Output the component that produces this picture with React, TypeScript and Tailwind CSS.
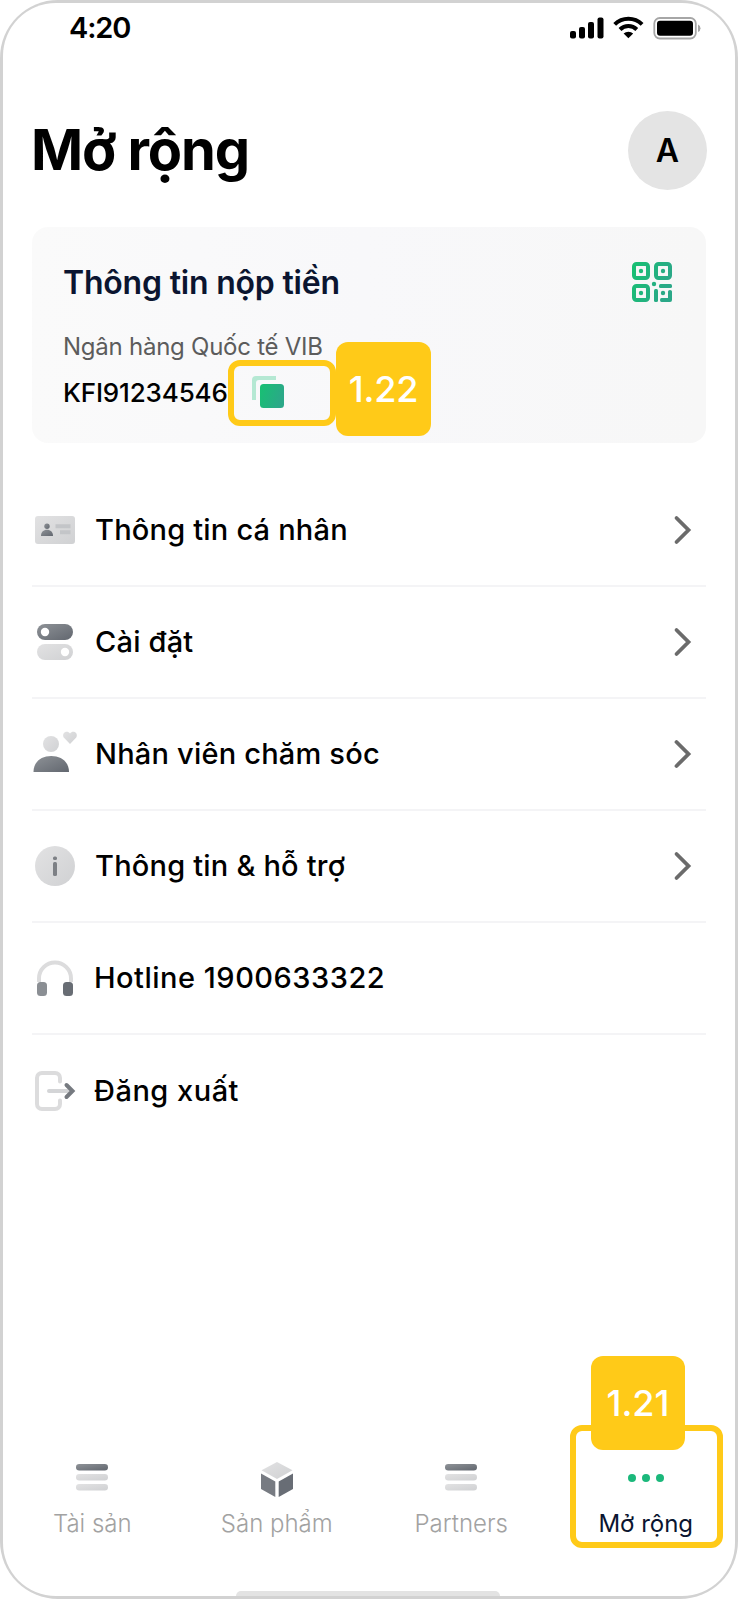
import type { ReactNode } from "react";

const Grads = () => (
  <svg width="0" height="0" className="absolute">
    <defs>
      <linearGradient id="dark" x1="0" y1="0" x2="1" y2="1">
        <stop offset="0" stopColor="#8e9297" />
        <stop offset="1" stopColor="#62676f" />
      </linearGradient>
      <linearGradient id="light" x1="0" y1="0" x2="1" y2="1">
        <stop offset="0" stopColor="#e2e2e3" />
        <stop offset="1" stopColor="#d0d1d3" />
      </linearGradient>
      <linearGradient id="green" x1="0" y1="0" x2="1" y2="0.35">
        <stop offset="0" stopColor="#17c172" />
        <stop offset="1" stopColor="#2ba888" />
      </linearGradient>
      <linearGradient id="qr" gradientUnits="userSpaceOnUse" x1="0" y1="0" x2="40" y2="14">
        <stop offset="0" stopColor="#17c172" />
        <stop offset="1" stopColor="#2ba888" />
      </linearGradient>
    </defs>
  </svg>
);

const IdCard = () => (
  <svg width="48" height="48" viewBox="0 0 48 48">
    <rect x="4" y="10" width="40" height="28" rx="3" fill="url(#light)" />
    <circle cx="16" cy="20.3" r="2.7" fill="url(#dark)" />
    <path d="M10 30c0-4 2.600-6.200 6-6.200s6 2.200 6 6.200z" fill="url(#dark)" />
    <path d="M24.500 20.200h15M29 26.200h10.500" stroke="#c3c5c8" strokeWidth="4" />
  </svg>
);

const Toggles = () => (
  <svg width="48" height="48" viewBox="0 0 48 48">
    <rect x="6" y="6" width="36" height="16" rx="8" fill="url(#dark)" />
    <circle cx="14" cy="14" r="4.200" fill="#fff" />
    <rect x="6" y="26" width="36" height="16" rx="8" fill="url(#light)" />
    <circle cx="34" cy="34" r="4.200" fill="#fff" />
  </svg>
);

const Carer = () => (
  <svg width="48" height="48" viewBox="0 0 48 48">
    <circle cx="20" cy="14" r="8" fill="url(#light)" />
    <path d="M2.500 42c0-10 7.500-16 17.700-16S38 32 38 42z" fill="url(#dark)" />
    <path
      d="M39 14l-6-6.200c-1.500-1.800-1-5 1.300-5.900 1.800-.7 3.600 0 4.700 1.500 1.100-1.500 2.900-2.200 4.700-1.500 2.300.9 2.800 4.100 1.300 5.900z"
      fill="url(#light)"
    />
  </svg>
);

const Info = () => (
  <svg width="48" height="48" viewBox="0 0 48 48">
    <circle cx="24" cy="24" r="20" fill="url(#light)" />
    <rect x="22" y="14.500" width="4" height="3.600" rx="1.500" fill="#7d8085" />
    <rect x="22" y="20" width="4" height="14" rx="1.500" fill="#7d8085" />
  </svg>
);

const Headphones = () => (
  <svg width="48" height="48" viewBox="0 0 48 48">
    <path d="M8 28v-3.500a16 16 0 0 1 32 0V28" fill="none" stroke="#dcdcdd" strokeWidth="4" />
    <rect x="6" y="28" width="10" height="14" rx="3.500" fill="#8b8f94" />
    <rect x="32" y="28" width="10" height="14" rx="3.500" fill="#686d74" />
  </svg>
);

const Logout = () => (
  <svg width="48" height="48" viewBox="0 0 48 48" fill="none" strokeLinecap="round">
    <path d="M29 14.500V11c0-3-2-5-5-5H11c-3 0-5 2-5 5v26c0 3 2 5 5 5h13c3 0 5-2 5-5v-3.500" stroke="#dcdcdd" strokeWidth="4" />
    <path d="M18 24h19" stroke="#d4d5d7" strokeWidth="4" />
    <path d="M35.500 18l6 6-6 6" stroke="#767a80" strokeWidth="4" strokeLinejoin="miter" />
  </svg>
);

const Chevron = () => (
  <svg width="24" height="32" viewBox="0 0 24 32" fill="none" stroke="#6b6b6b" strokeWidth="3.800" strokeLinecap="round">
    <path d="M5.500 4l12 12-12 12" />
  </svg>
);

const QrCode = () => (
  <svg width="40" height="40" viewBox="0 0 40 40" fill="none" stroke="url(#qr)" strokeWidth="4">
    <rect x="2" y="2" width="14" height="14" rx="2.500" />
    <rect x="24" y="2" width="14" height="14" rx="2.500" />
    <rect x="2" y="24" width="14" height="14" rx="2.500" />
    <g fill="url(#qr)" stroke="none">
      <circle cx="9" cy="9" r="2.200" />
      <circle cx="31" cy="9" r="2.200" />
      <circle cx="9" cy="31" r="2.200" />
      <circle cx="31" cy="31" r="2.200" />
      <circle cx="22" cy="22" r="2.200" />
      <rect x="27" y="22" width="13" height="4" rx="1.500" />
      <rect x="22" y="27" width="4" height="13" rx="1.500" />
      <path d="M36 29.500q0-1.500 2-1.500t2 1.500V38q0 2-2 2h-8.500q-1.500 0-1.500-2t1.500-2H36z" />
    </g>
  </svg>
);

const Bars = () => (
  <svg width="40" height="40" viewBox="0 0 40 40">
    <rect x="4" y="7" width="32" height="6.500" rx="3.200" fill="url(#dark)" />
    <rect x="4" y="17" width="32" height="6.500" rx="3.200" fill="url(#light)" />
    <rect x="4" y="27" width="32" height="6.500" rx="3.200" fill="url(#light)" />
  </svg>
);

const Box = () => (
  <svg width="40" height="40" viewBox="0 0 40 40">
    <path d="M20 5l15.500 8.200L20 22 4.500 13.200z" fill="url(#light)" />
    <path d="M4 16.500l14.300 8V40L4 32z" fill="#777b82" />
    <path d="M36 16.500l-14.300 8V40L36 32z" fill="#686d75" />
  </svg>
);

const Dots = () => (
  <svg width="40" height="40" viewBox="0 0 40 40" fill="#1bb87b">
    <circle cx="6" cy="21" r="4" />
    <circle cx="20" cy="21" r="4" />
    <circle cx="34" cy="21" r="4" />
  </svg>
);

const menu: { label: string; icon: ReactNode; arrow: boolean }[] = [
  { label: "Thông tin cá nhân", icon: <IdCard />, arrow: true },
  { label: "Cài đặt", icon: <Toggles />, arrow: true },
  { label: "Nhân viên chăm sóc", icon: <Carer />, arrow: true },
  { label: "Thông tin & hỗ trợ", icon: <Info />, arrow: true },
  { label: "Hotline 1900633322", icon: <Headphones />, arrow: false },
  { label: "Đăng xuất", icon: <Logout />, arrow: false },
];

const tabs: { label: string; icon: ReactNode; active?: boolean }[] = [
  { label: "Tài sản", icon: <Bars /> },
  { label: "Sản phẩm", icon: <Box /> },
  { label: "Partners", icon: <Bars /> },
  { label: "Mở rộng", icon: <Dots />, active: true },
];

function StatusBar() {
  return (
    <div className="flex h-12 items-center justify-between pl-[66px] pr-[33px]">
      <span className="text-[29px] font-semibold leading-none tracking-[-1.1px]">4:20</span>
      <svg width="132" height="24" viewBox="0 0 132 24" className="mt-0.5">
        <rect x="0" y="15" width="6" height="7.500" rx="2" />
        <rect x="9" y="11" width="6" height="11.500" rx="2" />
        <rect x="18" y="6" width="6" height="16.500" rx="2" />
        <rect x="27.500" y="1.500" width="6" height="21" rx="2" />
        <g fill="none" stroke="#000" strokeWidth="4">
          <path d="M44.700 8.300a19.500 19.500 0 0 1 27.400 0" />
          <path d="M50 13.500a12 12 0 0 1 16.800 0" />
        </g>
        <path d="M58.400 22.300l-4.800-4.700a7 7 0 0 1 9.600 0z" />
        <rect x="84.300" y="2" width="41.500" height="20.500" rx="5.500" fill="none" stroke="#a6a6a6" strokeWidth="1.800" />
        <rect x="87" y="4.800" width="36" height="15" rx="3" />
        <path d="M128 8.500q2.500 1 2.500 3.700t-2.500 3.700z" fill="#a6a6a6" />
      </svg>
    </div>
  );
}

function DepositCard() {
  return (
    <section className="mx-[29px] mt-[37px] h-[216px] rounded-2xl bg-gradient-to-r from-[#fafafa] via-[#f8f8fa] to-[#f7f7f7] pl-[31px] pr-[34.5px] pt-[33px]">
      <div className="flex items-center justify-between">
        <h2 className="pt-0.5 text-[32px] font-semibold leading-[42px] tracking-[-0.2px] text-[#0b1530]">Thông tin nộp tiền</h2>
        <QrCode />
      </div>
      <p className="mt-[27px] text-2xl leading-8 tracking-[-0.25px] text-[#5c5c5c]">Ngân hàng Quốc tế VIB</p>
      <div className="relative mt-3.5 flex h-8 items-center">
        <span className="text-[26px] font-medium leading-8 tracking-[-0.15px]">KFI91234546</span>
        <div className="absolute left-[164.5px] top-[-17px] flex h-[66px] w-[108px] items-center rounded-xl border-[6px] border-[#ffca18] pb-0.5 pl-[18px]">
          <svg width="32" height="32" viewBox="0 0 32 32">
            <path d="M24 0H4Q0 0 0 4v20h4V7q0-3 3-3h17z" fill="#b5e8d3" />
            <rect x="8" y="8" width="24" height="24" rx="3.500" fill="url(#green)" />
          </svg>
        </div>
        <div className="absolute left-[273px] top-[-35px] flex h-[94px] w-[95px] items-center justify-center rounded-xl bg-[#ffca18] text-4xl font-medium tracking-[-0.2px] text-white">
          1.22
        </div>
      </div>
    </section>
  );
}

export default function App() {
  return (
    <div className="h-[1599px] w-[738px] overflow-hidden rounded-[58px] bg-[#d2d2d2] p-[3px] font-['Inter',sans-serif] text-black">
      <div className="relative flex h-full flex-col rounded-[53px] bg-white">
        <Grads />
        <StatusBar />

        <header className="mx-[29px] mt-[59px] flex h-20 items-center justify-between">
          <h1 className="-ml-px text-[56px] font-bold leading-none tracking-[-1.1px]">Mở rộng</h1>
          <div className="-mr-px flex size-[79px] items-center justify-center rounded-full bg-[#e4e4e4] pt-0.5 text-[32px] font-semibold">
            A
          </div>
        </header>

        <DepositCard />

        <ul className="mx-[29px] mt-8">
          {menu.map((m) => (
            <li key={m.label} className="flex h-28 items-center border-b-2 border-[#f4f4f6] pr-[11px] last:border-b-0">
              <span className="-ml-px">{m.icon}</span>
              <span className={m.arrow ? "ml-4 grow text-[29px] font-medium tracking-[0.2px]" : "ml-[15px] grow text-[29px] font-medium tracking-[0.5px]"}>
                {m.label}
              </span>
              {m.arrow && <Chevron />}
            </li>
          ))}
        </ul>

        <nav className="-mx-[3px] mb-14 mt-auto flex">
          {tabs.map((t) => (
            <div key={t.label} className="relative flex flex-1 flex-col items-center">
              {t.icon}
              <span className={t.active ? "mt-[11px] text-2xl leading-8 text-[#0b1530]" : "mt-[11px] text-2xl font-light leading-8 text-[#a2a2a2]"}>
                {t.label}
              </span>
              {t.active && (
                <>
                  <div className="absolute -top-8 left-[16.5px] h-[123px] w-[153px] rounded-xl border-[6px] border-[#ffca18]" />
                  <div className="absolute -top-[101px] left-[37.5px] flex size-[94px] items-center justify-center rounded-xl bg-[#ffca18] text-4xl font-medium text-white">
                    1.21
                  </div>
                </>
              )}
            </div>
          ))}
        </nav>

        {/* home indicator */}
        <div className="absolute bottom-0 left-[233px] h-[5px] w-[264px] rounded-t-[5px] bg-[#e3e3e3]" />
      </div>
    </div>
  );
}
